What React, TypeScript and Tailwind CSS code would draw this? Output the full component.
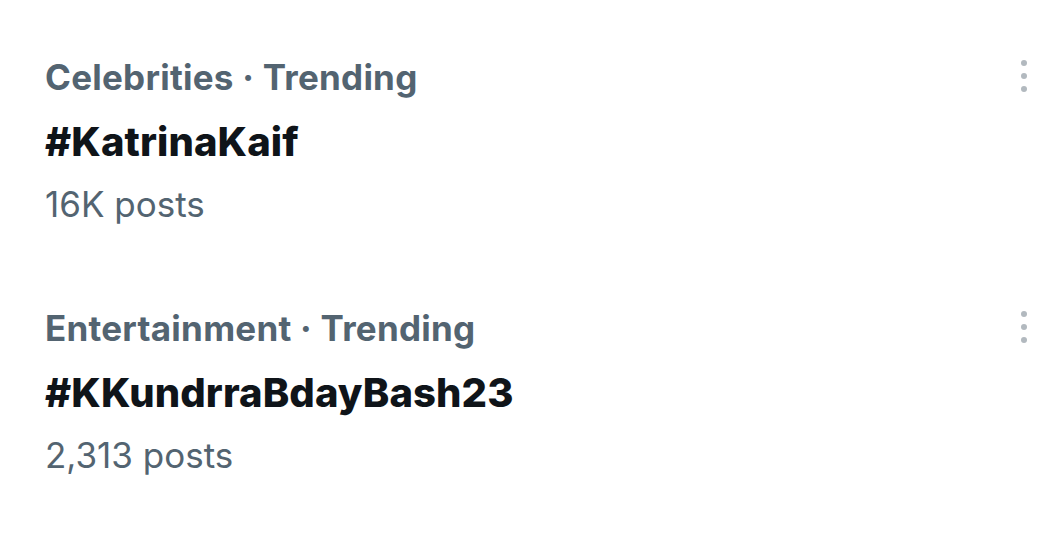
const trends = [
  { category: "Celebrities · Trending", tag: "#KatrinaKaif", posts: "16K posts" },
  { category: "Entertainment · Trending", tag: "#KKundrraBdayBash23", posts: "2,313 posts" },
];

function MoreDots() {
  return (
    <div className="flex flex-col items-center gap-[7px] pt-[3px]">
      <span className="block h-[6px] w-[6px] rounded-full bg-[#b2b9bf]" />
      <span className="block h-[6px] w-[6px] rounded-full bg-[#b2b9bf]" />
      <span className="block h-[6px] w-[6px] rounded-full bg-[#b2b9bf]" />
    </div>
  );
}

export default function App() {
  return (
    <main
      className="w-[1061px] h-[535px] bg-white pl-[45px] pr-[34px] pt-[57px] flex flex-col gap-[82px]"
      style={{ fontFamily: "Inter, 'Noto Sans', sans-serif" }}
    >
      {trends.map((t) => (
        <div key={t.tag} className="flex justify-between items-start">
          <div className="flex flex-col">
            <p className="text-[35px] leading-[40px] font-bold text-[#536471] tracking-[0.25px]">{t.category}</p>
            <p className="mt-[20px] text-[40px] leading-[50px] font-extrabold text-[#0f1419] tracking-[0.1px]">{t.tag}</p>
            <p className="mt-[15px] text-[35px] leading-[44px] text-[#536471]">{t.posts}</p>
          </div>
          <MoreDots />
        </div>
      ))}
    </main>
  );
}
